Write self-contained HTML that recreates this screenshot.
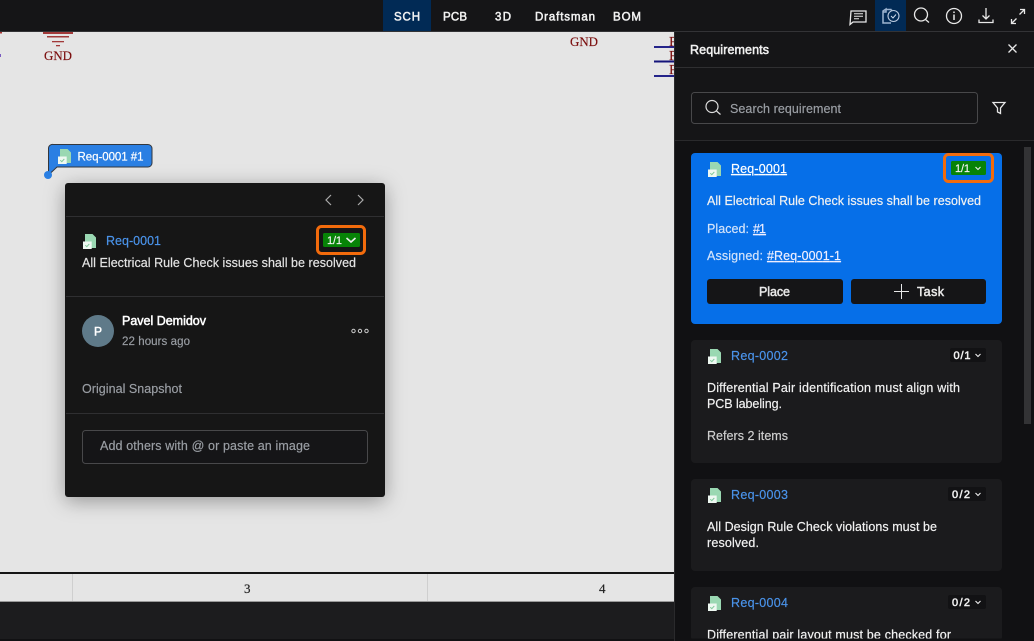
<!DOCTYPE html>
<html><head><meta charset="utf-8"><style>
html,body{margin:0;padding:0;background:#111113;overflow:hidden}
svg{display:block}
text{font-family:"Liberation Sans",sans-serif;font-size:12.5px;color:#f2f2f2;fill:currentColor;stroke:currentColor;stroke-width:.18;white-space:pre}
.b{stroke-width:.5}
.n{font-size:11.5px}
.t{font-size:11px}
.s{font-family:"Liberation Serif",serif;font-size:13px;color:#7a0c0c;stroke-width:.15}
.l{color:#4a93ea}
.g{color:#9a9ea4}
.st{fill:none;stroke:#e8e8e8;stroke-width:1.3}
</style></head><body>
<svg width="1034" height="641" viewBox="0 0 1034 641" xmlns="http://www.w3.org/2000/svg">
<defs>
<filter id="sh" x="-20%" y="-20%" width="140%" height="140%"><feDropShadow dx="0" dy="4" stdDeviation="10" flood-color="#000" flood-opacity=".35"/></filter>
<g id="doc"><path d="M2 0h7.500l3.500 3.500v10.500H2z" fill="#9ad8b2"/><rect x="0" y="7.500" width="8.700" height="7.500" fill="#eef8f1"/><path d="M2.300 11.200l1.500 1.500 2.500-2.800" fill="none" stroke="#7cc797" stroke-width="1"/></g>
</defs>
<rect width="1034" height="641" fill="#111113"/>
<!-- canvas -->
<rect x="0" y="32" width="674" height="570" fill="#e5e5e5"/>
<rect x="0" y="32" width="2" height="1.500" fill="#a33"/>
<rect x="0" y="54" width="1" height="3" fill="#7a5cc0"/>
<g fill="#a23a3a"><rect x="43" y="32" width="30" height="2"/><rect x="47" y="36" width="22" height="1.500"/><rect x="52" y="41" width="12" height="1.300"/><rect x="56" y="45" width="4" height="1.300"/></g>
<text class="s" x="44" y="60" textLength="28" lengthAdjust="spacingAndGlyphs">GND</text>
<text class="s" x="570" y="46" textLength="28" lengthAdjust="spacingAndGlyphs">GND</text>
<rect x="654" y="46" width="20" height="2" fill="#24248a"/><rect x="654" y="60.500" width="20" height="2" fill="#14147a"/><rect x="654" y="75" width="20" height="2" fill="#24248a"/>
<text class="s" x="669" y="46" style="font-size:14px">F</text><text class="s" x="669" y="60" style="font-size:14px">F</text><text class="s" x="669" y="74" style="font-size:14px">F</text>
<rect x="0" y="572" width="674" height="2" fill="#151515"/>
<rect x="72" y="574" width="1" height="27" fill="#cfcfcf"/><rect x="427" y="574" width="1" height="27" fill="#cfcfcf"/>
<rect x="0" y="601" width="674" height="1" fill="#999"/>
<text x="244" y="593" style="font-family:'Liberation Serif',serif;font-size:13px;color:#222">3</text>
<text x="599" y="593" style="font-family:'Liberation Serif',serif;font-size:13px;color:#222">4</text>
<rect x="0" y="602" width="674" height="37" fill="#1c1c1e"/>
<!-- topbar -->
<rect x="0" y="0" width="1034" height="31" fill="#151517"/><rect x="0" y="31" width="1034" height="1" fill="#333336"/>
<rect x="383" y="0" width="48" height="31" fill="#012a55"/>
<rect x="875" y="0" width="31" height="31" fill="#012a55"/>
<text class="b n" x="394" y="20.500" textLength="26">SCH</text>
<text class="b n" x="443" y="20.500" textLength="24">PCB</text>
<text class="b n" x="495" y="20.500" textLength="16">3D</text>
<text class="b n" x="535" y="20.500" textLength="60">Draftsman</text>
<text class="b n" x="613" y="20.500" textLength="28">BOM</text>
<!-- top icons -->
<g class="st" fill="none" stroke="#e8e8e8" stroke-width="1.300">
<path d="M851 11h15v11h-13l-3 2.500z"/><path d="M854 13.800h9M854 16.300h9M854 18.800h5" stroke-width="1"/>
<circle cx="921" cy="14.500" r="6.500"/><path d="M925.500 19.500l3.500 3"/>
<circle cx="954" cy="16" r="7.500"/><path d="M954 14.500v5.500M954 11.500v1.500" stroke-width="1.500"/>
<path d="M986 8v11M982.500 15.500l3.500 3.500 3.500-3.500"/><path d="M979 19.500v3h14v-3"/>
<path d="M1011.500 23.500l5-5M1011.500 19v4.500h4.500M1024.500 9.500l-5 5M1020 9.500h4.500v4.500"/>
</g>
<path d="M886 9.500h5.500M891.500 9.500v3M883 11l3-2v3h-3zM883 12v11h8" fill="none" stroke="#9db4d0" stroke-width="1.500"/>
<circle cx="893.500" cy="16" r="5.500" fill="#012a55" stroke="#b9c9de" stroke-width="1.100"/><path d="M891 16l2 2 3-3.500" fill="none" stroke="#cfdcec" stroke-width="1"/>
<!-- right panel -->
<rect x="674" y="32" width="360" height="109" fill="#151517"/>
<rect x="674" y="32" width="1" height="609" fill="#2a2a2c"/>
<rect x="675" y="67" width="359" height="1" fill="#2f2f31"/>
<rect x="675" y="140" width="359" height="1" fill="#2a2a2c"/>
<text class="b" x="690" y="54" textLength="79">Requirements</text>
<g fill="none" stroke="#e8e8e8" stroke-width="1.300">
<path d="M1008.500 44.500l8 8M1016.500 44.500l-8 8"/>
<path d="M993 102.500h12l-4.500 5.500v5.500l-3-1.500v-4z"/>
</g>
<rect x="691.500" y="92.500" width="286" height="31" rx="3" fill="#151517" stroke="#48484a"/>
<circle cx="712" cy="106.500" r="6" fill="none" stroke="#ddd" stroke-width="1.200"/><path d="M716.500 111l4 3.500" stroke="#ddd" stroke-width="1.200"/>
<text class="g" x="730" y="113" textLength="111">Search requirement</text>
<rect x="1024" y="147" width="7" height="277" fill="#333335"/>
<!-- card 1 -->
<rect x="691" y="153" width="311" height="171" rx="4" fill="#066fe8"/>
<use href="#doc" x="708" y="162"/>
<text x="731" y="173" textLength="56" style="color:#fff;text-decoration:underline">Req-0001</text>
<rect x="944.500" y="154.500" width="48" height="27" rx="4" fill="none" stroke="#f26b0c" stroke-width="3"/>
<rect x="951" y="161" width="35" height="14" rx="1.500" fill="#078307"/>
<text class="t" x="955" y="172" textLength="15">1/1</text>
<path d="M975.500 167l2.500 2.500 2.500-2.500" fill="none" stroke="#eee" stroke-width="1.100"/>
<text x="707" y="205" textLength="274">All Electrical Rule Check issues shall be resolved</text>
<text x="707" y="233" textLength="42" style="color:#d3e3fa">Placed:</text>
<text x="753" y="233" textLength="13" style="color:#eef;text-decoration:underline">#1</text>
<text x="707" y="260" textLength="56" style="color:#d3e3fa">Assigned:</text>
<text x="767" y="260" textLength="74" style="color:#eef;text-decoration:underline">#Req-0001-1</text>
<rect x="707" y="279" width="136" height="25" rx="3" fill="#151517"/>
<rect x="851" y="279" width="135" height="25" rx="3" fill="#151517"/>
<text class="b" x="759" y="296" textLength="31" style="color:#e8e8e8">Place</text>
<path d="M894 291.500h15M901.500 284v15" stroke="#e8e8e8" stroke-width="1"/>
<text class="b" x="917" y="296" textLength="27" style="color:#e8e8e8">Task</text>
<!-- card 2 -->
<rect x="691" y="340" width="311" height="123" rx="4" fill="#1b1b1d"/>
<use href="#doc" x="708" y="349"/>
<text class="l" x="731" y="360" textLength="57">Req-0002</text>
<rect x="950" y="348" width="36" height="14" rx="2" fill="#121214"/>
<text class="b t" x="953.500" y="359" textLength="17">0/1</text>
<path d="M975.500 354l2.500 2.500 2.500-2.500" fill="none" stroke="#eee" stroke-width="1.100"/>
<text x="707" y="392" textLength="253">Differential Pair identification must align with</text>
<text x="707" y="408" textLength="75">PCB labeling.</text>
<text x="707" y="440" textLength="81" style="color:#cfcfcf">Refers 2 items</text>
<!-- card 3 -->
<rect x="691" y="479" width="311" height="92" rx="4" fill="#1b1b1d"/>
<use href="#doc" x="708" y="488"/>
<text class="l" x="731" y="499" textLength="57">Req-0003</text>
<rect x="948" y="487" width="38" height="14" rx="2" fill="#121214"/>
<text class="b t" x="952" y="498" textLength="18">0/2</text>
<path d="M975.500 493l2.500 2.500 2.500-2.500" fill="none" stroke="#eee" stroke-width="1.100"/>
<text x="707" y="531" textLength="230">All Design Rule Check violations must be</text>
<text x="707" y="547" textLength="52">resolved.</text>
<!-- card 4 -->
<rect x="691" y="587" width="311" height="54" rx="4" fill="#1b1b1d"/>
<use href="#doc" x="708" y="596"/>
<text class="l" x="731" y="607" textLength="57">Req-0004</text>
<rect x="948" y="595" width="38" height="14" rx="2" fill="#121214"/>
<text class="b t" x="952" y="606" textLength="18">0/2</text>
<path d="M975.500 601l2.500 2.500 2.500-2.500" fill="none" stroke="#eee" stroke-width="1.100"/>
<text x="707" y="639" textLength="244">Differential pair layout must be checked for</text>
<rect x="675" y="638.500" width="359" height="2.500" fill="#111113"/>
<!-- tag -->
<path d="M53.500 144.500h94.500a4 4 0 0 1 4 4v14.500a4 4 0 0 1-4 4H57l-8 7.500-.5 .5V148.500a4 4 0 0 1 5-4z" fill="#2a7fe3" stroke="#33373d" stroke-width="1"/>
<circle cx="48" cy="175" r="4" fill="#2a7fe3"/>
<use href="#doc" x="58" y="149"/>
<text class="n" x="77.500" y="160.500" textLength="66" style="color:#fff">Req-0001 #1</text>
<!-- popup -->
<rect x="65" y="183" width="320" height="314" rx="3" fill="#151517" filter="url(#sh)"/>
<path d="M331 195l-5 5 5 5" fill="none" stroke="#aaa" stroke-width="1.200"/>
<path d="M358 195l5 5-5 5" fill="none" stroke="#aaa" stroke-width="1.200"/>
<rect x="66" y="216" width="318" height="1" fill="#2f2f31"/>
<use href="#doc" x="83" y="234"/>
<text class="l" x="106" y="245" textLength="55">Req-0001</text>
<rect x="317.500" y="226.500" width="47" height="27" rx="4" fill="none" stroke="#f26b0c" stroke-width="3"/>
<rect x="323" y="233" width="37" height="14" rx="1.500" fill="#078307"/>
<text class="t" x="327" y="244" textLength="15">1/1</text>
<path d="M346.500 238l4.500 4 4.500-4" fill="none" stroke="#eee" stroke-width="1.600"/>
<text x="82" y="267" textLength="274" style="color:#e4e4e4">All Electrical Rule Check issues shall be resolved</text>
<rect x="66" y="296" width="318" height="1" fill="#2f2f31"/>
<circle cx="98" cy="331" r="16" fill="#5f7a89"/>
<text class="b" x="94" y="335.500" style="font-size:12px;color:#fff">P</text>
<text class="b" x="122" y="325" textLength="84" style="color:#fff">Pavel Demidov</text>
<text class="g" x="122" y="345" textLength="68" style="font-size:11.500px">22 hours ago</text>
<g fill="none" stroke="#ccc" stroke-width="1"><circle cx="353.500" cy="331" r="1.700"/><circle cx="360" cy="331" r="1.700"/><circle cx="366.500" cy="331" r="1.700"/></g>
<text class="g" x="82" y="393" textLength="100">Original Snapshot</text>
<rect x="66" y="413" width="318" height="1" fill="#2f2f31"/>
<rect x="82.500" y="430.500" width="285" height="33" rx="3" fill="#151517" stroke="#48484a"/>
<text class="g" x="100" y="450" textLength="210">Add others with @ or paste an image</text>
</svg>
</body></html>
